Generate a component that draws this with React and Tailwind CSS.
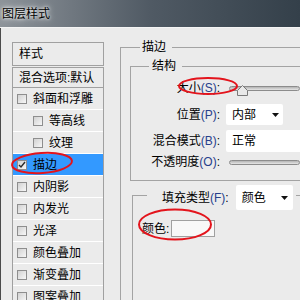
import React from 'react';

const items = [
  { label: '斜面和浮雕' },
  { label: '等高线', indent: true },
  { label: '纹理', indent: true },
  { label: '描边', active: true, checked: true },
  { label: '内阴影' },
  { label: '内发光' },
  { label: '光泽' },
  { label: '颜色叠加' },
  { label: '渐变叠加' },
  { label: '图案叠加' },
];

const CheckBox = ({ checked }) => (
  <span className="w-[10px] h-[10px] shrink-0 border border-[#8e8e8e] bg-gradient-to-br from-[#d2d2d2] to-[#f7f7f7] flex items-center justify-center">
    {checked && (
      <svg width="8" height="8" viewBox="0 0 8 8">
        <path d="M1 4l2 2 4-5" fill="none" stroke="#2a2a2a" strokeWidth="1.4" />
      </svg>
    )}
  </span>
);

const Caret = () => (
  <svg width="7" height="4" viewBox="0 0 7 4" className="shrink-0">
    <path d="M0 0h7L3.5 4z" fill="#111" />
  </svg>
);

const Hot = ({ children }) => <span className="text-[#27408b]">{children}</span>;

const GroupHeader = ({ lead, title, gap }) => (
  <div className="flex items-center h-[14px]">
    <div className={`self-end h-[7px] border-l border-t border-[#a3a3a3] ${lead}`} />
    <span className={gap}>{title}</span>
    <div className="flex-1 h-px bg-[#a3a3a3] ml-[6px]" />
  </div>
);

const Slider = ({ thumb }) => (
  <div className="relative flex-1 h-[14px] flex items-center">
    <div className="w-full h-[5px] rounded-full border border-[#8c8c8c] bg-gradient-to-b from-[#b4b4b4] to-[#e6e6e6]" />
    {thumb && (
      <svg width="11" height="11" viewBox="0 0 11 11" className="absolute left-[8px] top-[4px]">
        <path d="M5.5 0.5L10.5 5.5V10.5H0.5V5.5z" fill="#e9e9e9" stroke="#7a7a7a" />
      </svg>
    )}
  </div>
);

export default function App() {
  return (
    <div className="relative w-[300px] h-[300px] overflow-hidden bg-[#ebebeb] text-[12px] leading-none text-black font-['Liberation_Sans','Noto_Sans_CJK_SC',sans-serif]">
      {/* title bar */}
      <div className="h-[28px] flex items-center pl-[2px] bg-gradient-to-r from-[#8e949a] via-[#505a64] to-[#34404a] border-b border-[#f4f4f4]">
        <span className="[text-shadow:0_0_6px_#fff,0_0_3px_#fff]">图层样式</span>
      </div>

      <div className="flex h-[272px] border-l border-[#4b4b4b]">
        {/* left list */}
        <div className="w-[103px] shrink-0 pl-[11px] pt-[14px]">
          <div className="w-[92px] h-[24px] border border-[#a0a0a0] flex items-center pl-[6px]">样式</div>
          <div className="w-[92px] h-[21px] mt-[1px] border border-[#a0a0a0] flex items-center pl-[6px]">混合选项:默认</div>
          <div className="w-[92px] border-x border-[#a0a0a0]">
            {items.map((it) => (
              <div
                key={it.label}
                className={`h-[22px] border-b border-white flex items-center gap-[6px] ${it.indent ? 'pl-[20px]' : 'pl-[4px]'} ${it.active ? 'bg-[#3399ff]' : ''}`}
              >
                <CheckBox checked={it.checked} />
                <span>{it.label}</span>
              </div>
            ))}
          </div>
        </div>

        {/* right panel */}
        <div className="flex-1 min-w-0 flex flex-col pl-[16px] pt-[12px] overflow-hidden">
          <GroupHeader lead="w-[20px]" title="描边" gap="ml-[2px]" />
          <div className="flex-1 flex flex-col border-l border-[#a3a3a3] pl-[9px]">
            <div className="mt-[5px]">
              <GroupHeader lead="w-[19px]" title="结构" gap="ml-[3px]" />
            </div>
            <div className="border-l border-b border-[#a3a3a3] pt-[5px] pb-[10px]">
              <div className="flex items-center h-[20px]">
                <span className="w-[89px] text-right">大小<Hot>(S)</Hot>:</span>
                <div className="ml-[9px] flex-1 flex"><Slider thumb /></div>
              </div>
              <div className="flex items-center h-[21px] mt-[6px]">
                <span className="w-[89px] text-right">位置<Hot>(P)</Hot>:</span>
                <div className="ml-[6px] w-[57px] h-[21px] bg-white rounded-[2px] flex items-center justify-between pl-[6px] pr-[4px]">
                  <span>内部</span>
                  <Caret />
                </div>
              </div>
              <div className="flex items-center h-[22px] mt-[5px]">
                <span className="w-[89px] text-right">混合模式<Hot>(B)</Hot>:</span>
                <div className="ml-[6px] flex-1 h-[22px] bg-white rounded-l-[2px] flex items-center pl-[6px]">
                  <span>正常</span>
                </div>
              </div>
              <div className="flex items-center h-[16px] mt-[2px]">
                <span className="w-[89px] text-right">不透明度<Hot>(O)</Hot>:</span>
                <div className="ml-[9px] flex-1 flex"><Slider /></div>
              </div>
            </div>

            {/* fill type group */}
            <div className="ml-[2px] flex h-[25px] mt-[4px]">
              <div className="self-end h-[15px] w-[15px] border-l border-t border-[#a3a3a3]" />
              <span className="ml-[15px] self-center">填充类型<Hot>(F)</Hot>:</span>
              <div className="ml-[7px] w-[57px] h-[25px] bg-white rounded-[2px] flex items-center justify-between pl-[6px] pr-[5px]">
                <span>颜色</span>
                <Caret />
              </div>
              <div className="flex-1 h-px bg-[#a3a3a3] mt-[10px] ml-[3px]" />
            </div>
            <div className="ml-[2px] flex-1 border-l border-[#a3a3a3] pl-[9px] pt-[10px]">
              <div className="flex items-center">
                <span>颜色:</span>
                <div className="ml-[2px] w-[44px] h-[17px] border border-[#a0a0a0] bg-[#f8f8f8]" />
              </div>
            </div>
          </div>
        </div>
      </div>

      {/* red annotation marks */}
      <svg className="absolute inset-0 pointer-events-none" width="300" height="300" viewBox="0 0 300 300">
        <ellipse cx="208" cy="86" rx="29" ry="8" fill="none" stroke="#e3141c" strokeWidth="2" />
        <ellipse cx="42" cy="163" rx="30" ry="10" fill="none" stroke="#e3141c" strokeWidth="2" transform="rotate(-4 42 163)" />
        <ellipse cx="175" cy="224.5" rx="36" ry="15" fill="none" stroke="#e3141c" strokeWidth="2" />
      </svg>
    </div>
  );
}
